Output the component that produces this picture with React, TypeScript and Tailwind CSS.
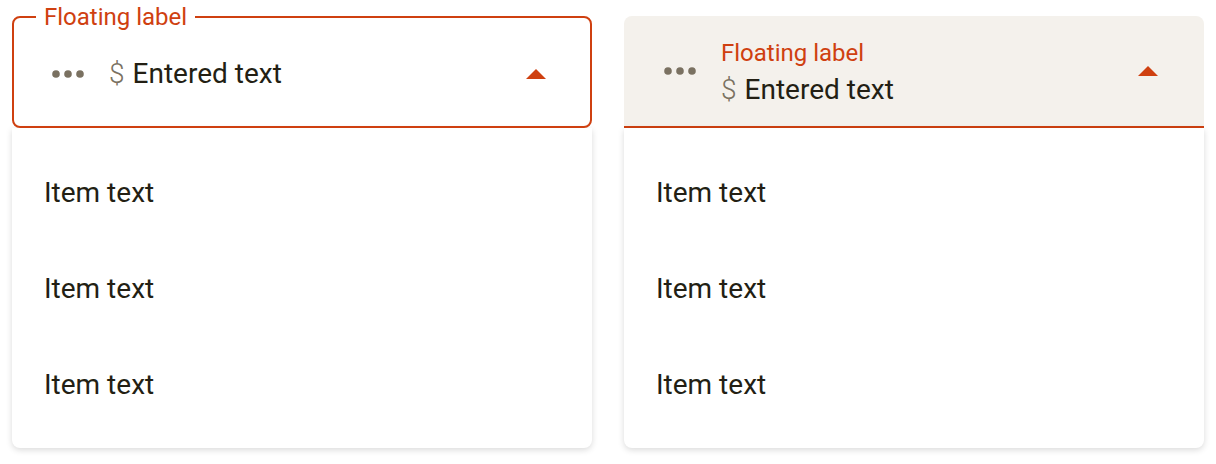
import React from 'react';

const ORANGE = 'text-[#cf4010]';

function Dots() {
  return (
    <svg width="32" height="8" viewBox="0 0 32 8" className="shrink-0">
      <circle cx="4" cy="4" r="3.8" fill="#7a7161" />
      <circle cx="16" cy="4" r="3.8" fill="#7a7161" />
      <circle cx="28" cy="4" r="3.8" fill="#7a7161" />
    </svg>
  );
}

function Caret() {
  return (
    <svg width="20" height="10" viewBox="0 0 20 10" className="shrink-0">
      <polygon points="0,10 10,0 20,10" fill="#cf4010" />
    </svg>
  );
}

function Menu() {
  return (
    <div className="bg-white rounded-b-lg shadow-[0_2px_6px_rgba(0,0,0,0.15)] pt-[17px] pb-[15px]">
      {['Item text', 'Item text', 'Item text'].map((t, i) => (
        <div key={i} className="h-24 flex items-center px-8 text-[28px] text-[#231f14]">
          {t}
        </div>
      ))}
    </div>
  );
}

export default function App() {
  return (
    <div
      className="w-[1216px] h-[464px] bg-white flex gap-8 px-3 pt-4"
      style={{ fontFamily: 'Roboto, "Noto Sans", sans-serif' }}
    >
      {/* Outlined select */}
      <div className="w-[580px] flex flex-col">
        <div className="relative h-[112px] border-2 border-[#cf4010] rounded-lg flex items-center pl-[38px] pr-[44px] pt-[3px]">
          <span className={`absolute -top-[15px] left-[22px] bg-white px-2 text-[24px] leading-7 ${ORANGE}`}>
            Floating label
          </span>
          <Dots />
          <div className="flex-1 flex items-center ml-[25px] text-[28px] leading-9">
            <span className="text-[#7a7161] font-light mr-[8px]">$</span>
            <span className="text-[#231f14]">Entered text</span>
          </div>
          <Caret />
        </div>
        <Menu />
      </div>

      {/* Filled select */}
      <div className="w-[580px] flex flex-col">
        <div className="h-[112px] bg-[#f4f1ec] rounded-t-lg border-b-2 border-[#cf4010] flex items-center pl-10 pr-[46px]">
          <Dots />
          <div className="flex-1 flex flex-col gap-[5px] ml-[25px] pt-[5px]">
            <span className={`text-[24px] leading-7 ${ORANGE}`}>Floating label</span>
            <div className="flex items-center text-[28px] leading-9">
              <span className="text-[#7a7161] font-light mr-[8px]">$</span>
              <span className="text-[#231f14]">Entered text</span>
            </div>
          </div>
          <Caret />
        </div>
        <Menu />
      </div>
    </div>
  );
}
